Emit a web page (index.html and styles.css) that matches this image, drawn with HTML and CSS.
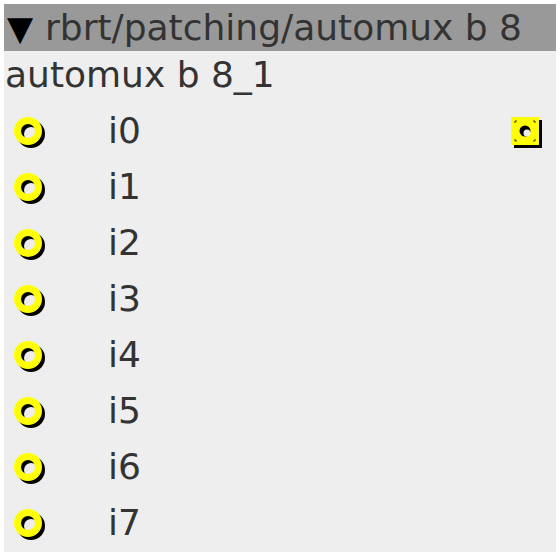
FILE: index.html
```html
<!DOCTYPE html>
<html lang="en">
<head>
  <meta charset="UTF-8" />
  <title>automux b 8</title>
  <link rel="stylesheet" href="styles.css">
</head>
<body>
  <div class="patch-object">
    <div class="object-title"><span class="collapse-arrow">▼</span>rbrt/patching/automux b 8</div>
    <div class="object-name">automux b 8_1</div>

    <div class="port-row">
      <svg class="inlet" viewBox="0 0 40 40"><circle cx="23" cy="23" r="10.5" class="shadow-ring"/><circle cx="20" cy="20" r="10.5" class="jack-ring"/></svg>
      <span class="port-label">i0</span>
      <svg class="outlet" viewBox="0 0 40 40">
        <rect x="9" y="9" width="28" height="28" fill="#000"/>
        <rect x="6" y="6" width="28" height="28" fill="#ffff00"/>
        <circle cx="20" cy="20" r="5.5" fill="#000"/>
        <circle cx="22" cy="22" r="3.5" fill="#eee"/>
        <path d="M10 12v-2h2M28 10h2v2M30 28v2h-2M12 30h-2v-2" class="corner"/>
      </svg>
    </div>
    <div class="port-row">
      <svg class="inlet" viewBox="0 0 40 40"><circle cx="23" cy="23" r="10.5" class="shadow-ring"/><circle cx="20" cy="20" r="10.5" class="jack-ring"/></svg>
      <span class="port-label">i1</span>
    </div>
    <div class="port-row">
      <svg class="inlet" viewBox="0 0 40 40"><circle cx="23" cy="23" r="10.5" class="shadow-ring"/><circle cx="20" cy="20" r="10.5" class="jack-ring"/></svg>
      <span class="port-label">i2</span>
    </div>
    <div class="port-row">
      <svg class="inlet" viewBox="0 0 40 40"><circle cx="23" cy="23" r="10.5" class="shadow-ring"/><circle cx="20" cy="20" r="10.5" class="jack-ring"/></svg>
      <span class="port-label">i3</span>
    </div>
    <div class="port-row">
      <svg class="inlet" viewBox="0 0 40 40"><circle cx="23" cy="23" r="10.5" class="shadow-ring"/><circle cx="20" cy="20" r="10.5" class="jack-ring"/></svg>
      <span class="port-label">i4</span>
    </div>
    <div class="port-row">
      <svg class="inlet" viewBox="0 0 40 40"><circle cx="23" cy="23" r="10.5" class="shadow-ring"/><circle cx="20" cy="20" r="10.5" class="jack-ring"/></svg>
      <span class="port-label">i5</span>
    </div>
    <div class="port-row">
      <svg class="inlet" viewBox="0 0 40 40"><circle cx="23" cy="23" r="10.5" class="shadow-ring"/><circle cx="20" cy="20" r="10.5" class="jack-ring"/></svg>
      <span class="port-label">i6</span>
    </div>
    <div class="port-row">
      <svg class="inlet" viewBox="0 0 40 40"><circle cx="23" cy="23" r="10.5" class="shadow-ring"/><circle cx="20" cy="20" r="10.5" class="jack-ring"/></svg>
      <span class="port-label">i7</span>
    </div>
  </div>
</body>
</html>
```

FILE: styles.css
```css
body {
  margin: 0;
  background: #fff;
  font-family: 'DejaVu Sans', sans-serif;
  color: #333;
}
.patch-object {
  margin: 4px;
  width: 552px;
  height: 548px;
  background: #eeeeee;
  font-size: 36px;
}
.object-title {
  height: 47px;
  line-height: 47px;
  background: #999999;
  padding-left: 3px;
  white-space: nowrap;
}
.collapse-arrow {
  display: inline-block;
  width: 38px;
  color: #000;
  font-size: 34px;
}
.object-name {
  line-height: 47px;
  padding-bottom: 5px;
  padding-left: 1px;
}
.port-row {
  display: flex;
  align-items: center;
  height: 56px;
  line-height: 56px;
}
.inlet {
  width: 40px;
  height: 40px;
  margin-left: 4px;
}
.shadow-ring {
  fill: none;
  stroke: #000;
  stroke-width: 7;
}
.jack-ring {
  fill: none;
  stroke: #ffff00;
  stroke-width: 7;
}
.port-label {
  margin-left: 60px;
}
.outlet {
  width: 40px;
  height: 40px;
  margin-left: auto;
  margin-right: 11px;
}
.corner {
  fill: none;
  stroke: #333;
  stroke-width: 1;
}
```
